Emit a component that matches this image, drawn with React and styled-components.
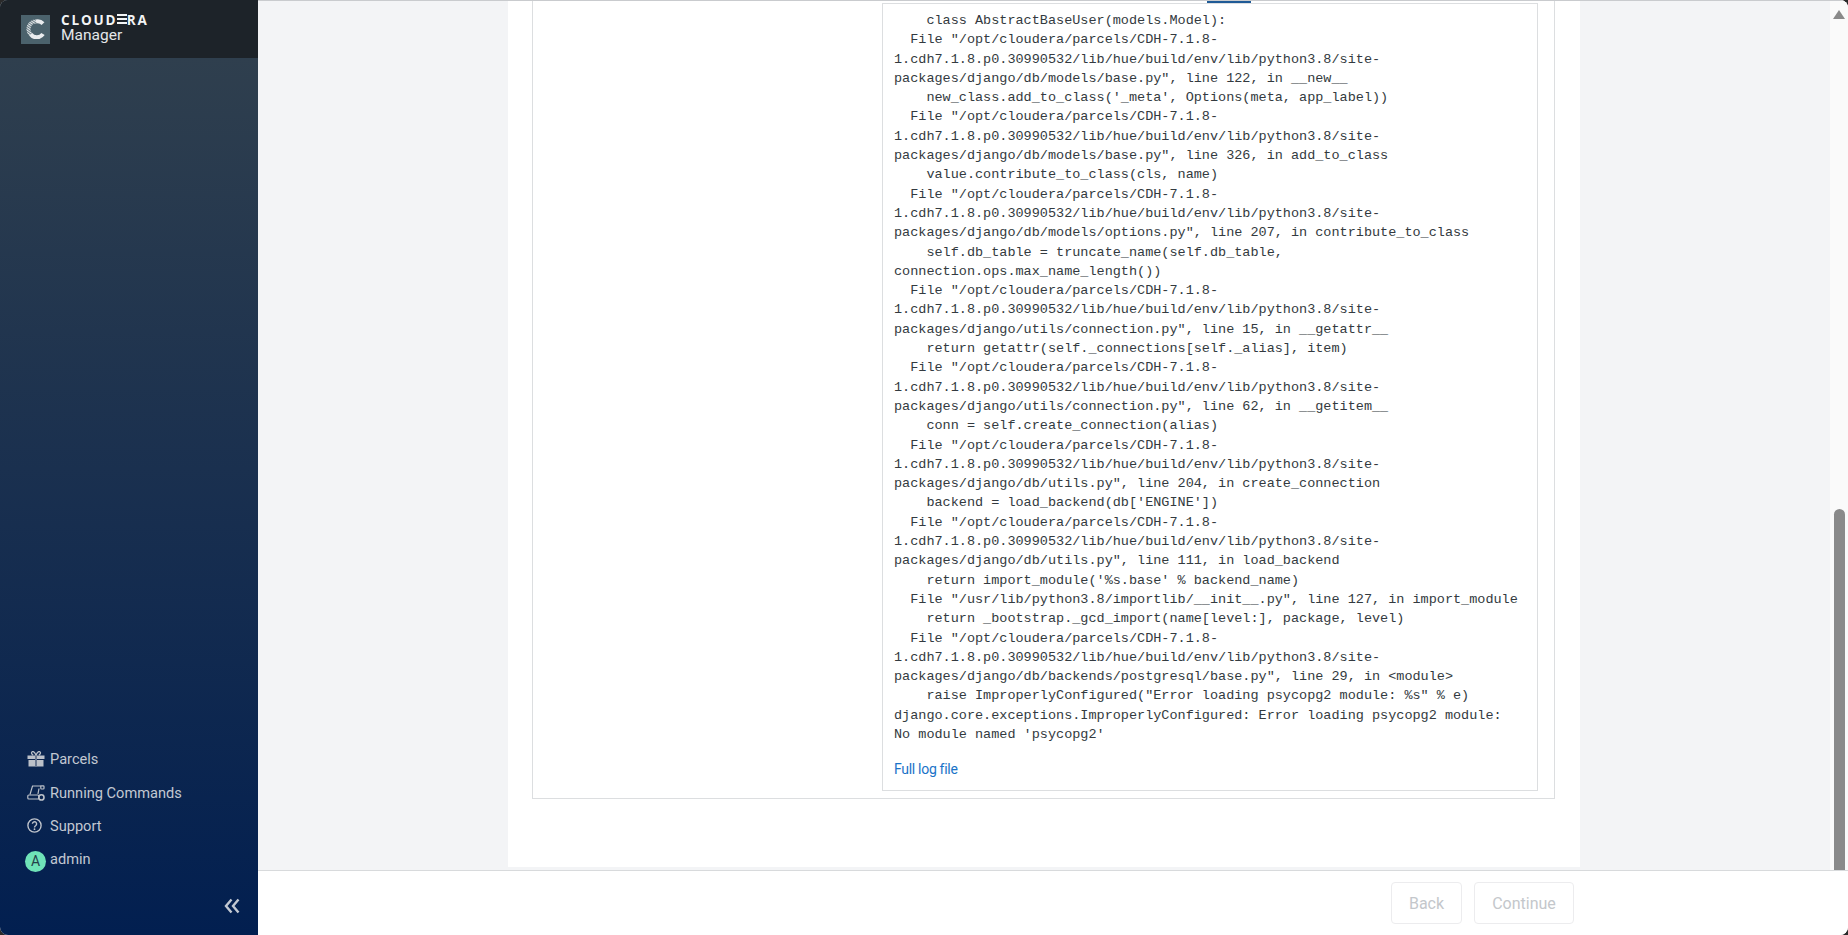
import styled, { createGlobalStyle } from "styled-components";

const GlobalStyle = createGlobalStyle`
  html, body {
    margin: 0;
    height: 100%;
    background: #2a2a2a;
    overflow: hidden;
  }
  #root {
    height: 100%;
  }
`;

const Shell = styled.div`
  display: flex;
  height: 935px;
  border-radius: 8px;
  overflow: hidden;
  font-family: Roboto, "Liberation Sans", sans-serif;
  background: #fff;
`;

const Sidebar = styled.aside`
  width: 258px;
  flex: none;
  display: flex;
  flex-direction: column;
  background: linear-gradient(180deg, #2f3f4e 58px, #021f50 100%);
`;

const Brand = styled.div`
  height: 58px;
  flex: none;
  box-sizing: border-box;
  display: flex;
  align-items: center;
  gap: 11px;
  padding: 0 0 1px 21px;
  background: #1d2329;
`;

const BrandMark = styled.div`
  width: 29px;
  height: 29px;
  margin-top: 1px;
  background: #4b626c;
  display: flex;
  align-items: center;
  justify-content: center;
`;

const BrandText = styled.div`
  display: flex;
  flex-direction: column;
  color: #e4e7e9;
`;

const Wordmark = styled.span`
  font-family: "Open Sans", sans-serif;
  font-weight: 700;
  font-size: 13.5px;
  letter-spacing: 1.85px;
  line-height: 14px;
  color: #f2f4f5;
`;

const StripedLetter = styled.span`
  color: transparent;
  background: repeating-linear-gradient(180deg, #f2f4f5 0 2px, transparent 2px 4px);
  background-position: 0 3px;
  background-size: 100% 10px;
  background-repeat: no-repeat;
`;

const ProductName = styled.span`
  font-size: 15.5px;
  line-height: 17px;
`;

const Nav = styled.nav`
  margin-top: auto;
  display: flex;
  flex-direction: column;
  padding-left: 25px;
`;

const NavItem = styled.div`
  height: 33.4px;
  display: flex;
  align-items: center;
  color: #c2c8d2;
  font-size: 14.6px;
`;

const NavIcon = styled.span`
  width: 25px;
  flex: none;
  display: flex;
  align-items: center;
  padding-left: 2px;
  box-sizing: border-box;
`;

const Avatar = styled.span`
  width: 21px;
  height: 21px;
  flex: none;
  margin-right: 4px;
  margin-top: 4px;
  border-radius: 50%;
  background: #6fe3b8;
  color: #24404a;
  font-size: 14px;
  display: flex;
  align-items: center;
  justify-content: center;
`;

const CollapseRow = styled.div`
  height: 59px;
  flex: none;
  display: flex;
  align-items: center;
  justify-content: flex-end;
  padding: 0 18px 0 0;
`;

const Main = styled.main`
  flex: 1;
  min-width: 0;
  display: flex;
  flex-direction: column;
`;

const ScrollArea = styled.div`
  flex: 1;
  min-height: 0;
  display: flex;
  overflow: hidden;
  background: #f3f4f6;
  border-top: 1px solid #c9cbce;
`;

const PageColumn = styled.div`
  flex: 1;
  min-width: 0;
  padding-left: 250px;
`;

const Sheet = styled.section`
  width: 1072px;
  height: 866px;
  box-sizing: border-box;
  padding: 0 25px 0 24px;
  background: #fff;
  overflow: hidden;
`;

const OuterBox = styled.div`
  position: relative;
  box-sizing: border-box;
  height: 798px;
  border: 1px solid #dcdee0;
  border-top: none;
  padding: 2px 0 0 349px;
`;

const TabSliver = styled.span`
  position: absolute;
  top: -1px;
  left: 674px;
  width: 44px;
  height: 3px;
  background: #1f5a96;
`;

const LogBox = styled.div`
  width: 656px;
  height: 788px;
  box-sizing: border-box;
  border: 1px solid #dcdee0;
  padding: 7px 12px 0 11px;
`;

const LogText = styled.pre`
  margin: 0;
  font-family: "Liberation Mono", monospace;
  font-size: 13.5px;
  line-height: 19.3px;
  color: #333a40;
`;

const LogLink = styled.a`
  display: block;
  margin-top: 15px;
  font-size: 14px;
  line-height: 20px;
  letter-spacing: -0.3px;
  color: #1a73c8;
`;

const Scrollbar = styled.div`
  width: 18px;
  flex: none;
  position: relative;
  background: #fafafa;
`;

const ScrollArrow = styled.span`
  position: absolute;
  top: 9px;
  left: 3px;
  width: 0;
  height: 0;
  border-left: 6.5px solid transparent;
  border-right: 6.5px solid transparent;
  border-bottom: 9px solid #8a8a8a;
`;

const ScrollThumb = styled.span`
  position: absolute;
  left: 4px;
  top: 508px;
  bottom: 0;
  width: 11px;
  border-radius: 6px 6px 0 0;
  background: #8a8a8a;
`;

const Footer = styled.footer`
  height: 65px;
  flex: none;
  box-sizing: border-box;
  border-top: 1px solid #d8dadc;
  background: #fff;
  display: flex;
  justify-content: flex-end;
  gap: 12px;
  padding: 11px 274px 0 0;
`;

const FooterButton = styled.button`
  width: ${(p) => p.$width}px;
  height: 42px;
  border: 1px solid #ececee;
  border-radius: 4px;
  background: #fff;
  color: #c4c7cb;
  font-family: inherit;
  font-size: 16px;
  padding: 0;
`;

const GiftIcon = () => (
  <svg width="18" height="16" viewBox="0 0 18 16" fill="#bcc1c9">
    <path d="M.5 4.5h17V8H.5zM1.5 9h15v6.5h-15z" />
    <path d="M8 4h2v11.5H8z" fill="#6a7890" />
    <path d="M9 4.2C7.5.8 6.2.2 5.2.7c-1.1.6-.8 2.6 1 3.5M9 4.2C10.5.8 11.8.2 12.8.7c1.1.6.8 2.6-1 3.5" fill="none" stroke="#bcc1c9" strokeWidth="1.3" />
  </svg>
);

const CommandsIcon = () => (
  <svg width="18" height="16" viewBox="0 0 18 16" fill="none" stroke="#bcc1c9" strokeWidth="1.2">
    <path d="M3 9.5 5.5 1h8.5" />
    <path d="M12 3.5 11 9" />
    <rect x="13.8" y=".8" width="3.2" height="3.2" rx=".8" />
    <rect x=".8" y="10" width="11" height="4" rx="1" />
    <circle cx="14.4" cy="12.4" r="2.6" strokeWidth="1.6" />
  </svg>
);

const HelpIcon = () => (
  <svg width="15" height="15" viewBox="0 0 15 15" fill="none" stroke="#bcc1c9" strokeWidth="1.4">
    <circle cx="7.5" cy="7.5" r="6.6" />
    <path d="M5.4 5.8a2.1 2.1 0 1 1 3.4 1.7c-.8.6-1.3 1-1.3 1.9" />
    <circle cx="7.5" cy="11.2" r=".9" fill="#bcc1c9" stroke="none" />
  </svg>
);

const CollapseIcon = () => (
  <svg width="16" height="16" viewBox="0 0 16 16" fill="none" stroke="#c2c8d2" strokeWidth="2.4">
    <path d="M7.5 1.5 2 8l5.5 6.5M14.5 1.5 9 8l5.5 6.5" />
  </svg>
);

const CloudMark = () => (
  <svg width="20" height="20" viewBox="0 0 20 20" fill="none">
    <defs>
      <pattern id="hatch" width="2" height="2" patternUnits="userSpaceOnUse" patternTransform="rotate(35)">
        <rect width="2" height="1.2" fill="#e3e7e9" />
      </pattern>
    </defs>
    <path d="M10 2.5a7.5 7.5 0 0 0-5.3 12.8" stroke="url(#hatch)" strokeWidth="4" />
    <path d="M17 4.6A7.5 7.5 0 0 0 10 2.5" stroke="#e9ecee" strokeWidth="4" />
    <path d="M4.7 15.3A7.5 7.5 0 0 0 17 15" stroke="#e9ecee" strokeWidth="4" />
  </svg>
);

const LOG = `    class AbstractBaseUser(models.Model):
  File "/opt/cloudera/parcels/CDH-7.1.8-
1.cdh7.1.8.p0.30990532/lib/hue/build/env/lib/python3.8/site-
packages/django/db/models/base.py", line 122, in __new__
    new_class.add_to_class('_meta', Options(meta, app_label))
  File "/opt/cloudera/parcels/CDH-7.1.8-
1.cdh7.1.8.p0.30990532/lib/hue/build/env/lib/python3.8/site-
packages/django/db/models/base.py", line 326, in add_to_class
    value.contribute_to_class(cls, name)
  File "/opt/cloudera/parcels/CDH-7.1.8-
1.cdh7.1.8.p0.30990532/lib/hue/build/env/lib/python3.8/site-
packages/django/db/models/options.py", line 207, in contribute_to_class
    self.db_table = truncate_name(self.db_table,
connection.ops.max_name_length())
  File "/opt/cloudera/parcels/CDH-7.1.8-
1.cdh7.1.8.p0.30990532/lib/hue/build/env/lib/python3.8/site-
packages/django/utils/connection.py", line 15, in __getattr__
    return getattr(self._connections[self._alias], item)
  File "/opt/cloudera/parcels/CDH-7.1.8-
1.cdh7.1.8.p0.30990532/lib/hue/build/env/lib/python3.8/site-
packages/django/utils/connection.py", line 62, in __getitem__
    conn = self.create_connection(alias)
  File "/opt/cloudera/parcels/CDH-7.1.8-
1.cdh7.1.8.p0.30990532/lib/hue/build/env/lib/python3.8/site-
packages/django/db/utils.py", line 204, in create_connection
    backend = load_backend(db['ENGINE'])
  File "/opt/cloudera/parcels/CDH-7.1.8-
1.cdh7.1.8.p0.30990532/lib/hue/build/env/lib/python3.8/site-
packages/django/db/utils.py", line 111, in load_backend
    return import_module('%s.base' % backend_name)
  File "/usr/lib/python3.8/importlib/__init__.py", line 127, in import_module
    return _bootstrap._gcd_import(name[level:], package, level)
  File "/opt/cloudera/parcels/CDH-7.1.8-
1.cdh7.1.8.p0.30990532/lib/hue/build/env/lib/python3.8/site-
packages/django/db/backends/postgresql/base.py", line 29, in <module>
    raise ImproperlyConfigured("Error loading psycopg2 module: %s" % e)
django.core.exceptions.ImproperlyConfigured: Error loading psycopg2 module:
No module named 'psycopg2'`;

export default function App() {
  return (
    <>
      <GlobalStyle />
      <Shell>
        <Sidebar>
          <Brand>
            <BrandMark>
              <CloudMark />
            </BrandMark>
            <BrandText>
              <Wordmark>
                CLOUD<StripedLetter>E</StripedLetter>RA
              </Wordmark>
              <ProductName>Manager</ProductName>
            </BrandText>
          </Brand>
          <Nav>
            <NavItem>
              <NavIcon><GiftIcon /></NavIcon>Parcels
            </NavItem>
            <NavItem>
              <NavIcon><CommandsIcon /></NavIcon>Running Commands
            </NavItem>
            <NavItem>
              <NavIcon><HelpIcon /></NavIcon>Support
            </NavItem>
            <NavItem>
              <Avatar>A</Avatar>admin
            </NavItem>
          </Nav>
          <CollapseRow>
            <CollapseIcon />
          </CollapseRow>
        </Sidebar>
        <Main>
          <ScrollArea>
            <PageColumn>
              <Sheet>
                <OuterBox>
                  <TabSliver />
                  <LogBox>
                    <LogText>{LOG}</LogText>
                    <LogLink>Full log file</LogLink>
                  </LogBox>
                </OuterBox>
              </Sheet>
            </PageColumn>
            <Scrollbar>
              <ScrollArrow />
              <ScrollThumb />
            </Scrollbar>
          </ScrollArea>
          <Footer>
            <FooterButton $width={71}>Back</FooterButton>
            <FooterButton $width={100}>Continue</FooterButton>
          </Footer>
        </Main>
      </Shell>
    </>
  );
}
